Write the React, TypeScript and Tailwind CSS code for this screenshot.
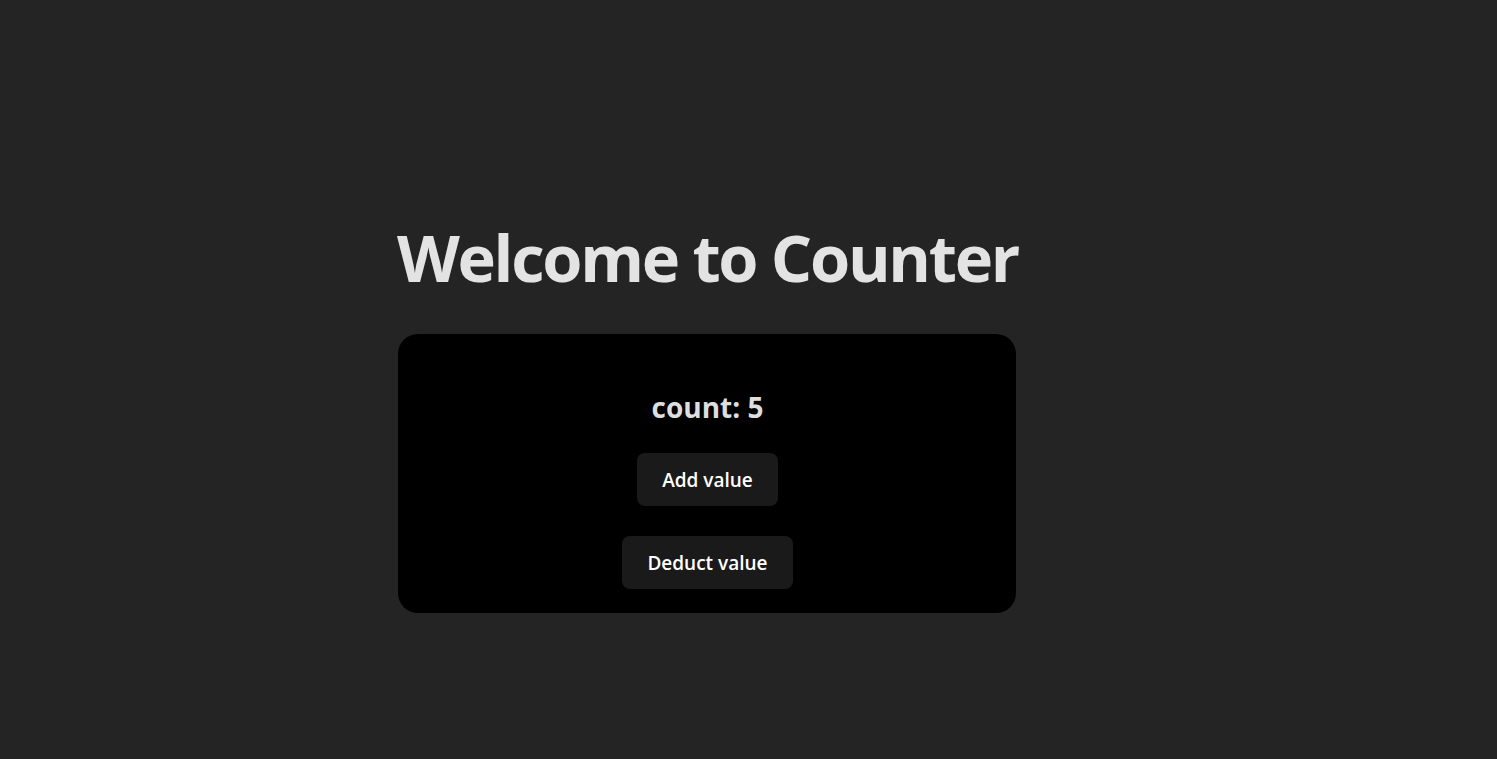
import React from "react";

export default function App() {
  return (
    <div
      className="min-h-screen w-full bg-[#242424] flex justify-center pr-[82px] pt-[225px]"
      style={{ fontFamily: '"Open Sans", "Noto Sans", sans-serif' }}
    >
      <div className="flex flex-col items-center">
        <h1 className="text-[65px] font-bold leading-none tracking-[-2.3px] text-[#e3e3e3] whitespace-nowrap">
          Welcome to Counter
        </h1>
        <div className="mt-[44px] w-[618px] h-[279px] rounded-[20px] bg-black flex flex-col items-center pt-[59px]">
          <h2 className="text-[28px] font-bold leading-none text-[#dedede]">count: 5</h2>
          <button className="mt-[32px] h-[53px] px-[25px] pt-[2px] rounded-lg bg-[#1a1a1a] text-[19px] font-semibold text-white">
            Add value
          </button>
          <button className="mt-[30px] h-[53px] px-[25px] pt-[2px] rounded-lg bg-[#1a1a1a] text-[19px] font-semibold text-white">
            Deduct value
          </button>
        </div>
      </div>
    </div>
  );
}
